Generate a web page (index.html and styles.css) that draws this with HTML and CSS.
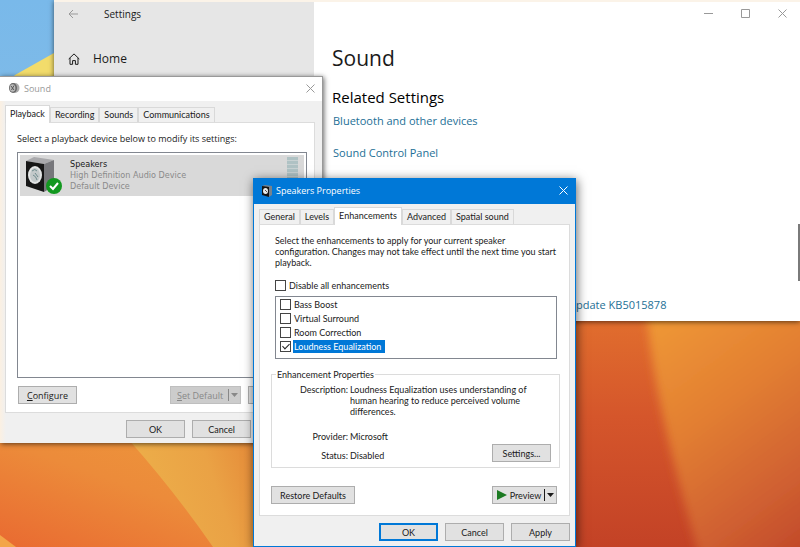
FILE: index.html
```html
<!DOCTYPE html>
<html lang="en">
<head>
    <meta charset="UTF-8">
    <meta name="viewport" content="width=device-width, initial-scale=1.0">
    <title>Sound Settings</title>
    <link rel="stylesheet" href="styles.css">
</head>
<body>
    <!-- Desktop wallpaper -->
    <svg class="wallpaper" viewBox="0 0 800 547" preserveAspectRatio="none" aria-hidden="true">
        <defs>
            <linearGradient id="sky" x1="0" y1="0" x2="0" y2="1">
                <stop offset="0" stop-color="#79b9ea"/>
                <stop offset="1" stop-color="#8fbfe0"/>
            </linearGradient>
            <linearGradient id="orange" x1="1" y1="0" x2="0" y2="1">
                <stop offset="0" stop-color="#ee9a3c"/>
                <stop offset="0.5" stop-color="#ec8b3a"/>
                <stop offset="1" stop-color="#e96a31"/>
            </linearGradient>
            <linearGradient id="petal" x1="0" y1="0.5" x2="1" y2="0.3">
                <stop offset="0" stop-color="#edb04a"/>
                <stop offset="0.5" stop-color="#eaa245"/>
                <stop offset="1" stop-color="#e27a30"/>
            </linearGradient>
            <linearGradient id="red" x1="0" y1="0" x2="0" y2="1">
                <stop offset="0" stop-color="#e2702e"/>
                <stop offset="0.45" stop-color="#d5562b"/>
                <stop offset="1" stop-color="#c34226"/>
            </linearGradient>
            <linearGradient id="glow" x1="0.2" y1="0" x2="0.7" y2="1">
                <stop offset="0" stop-color="#ef9936"/>
                <stop offset="0.4" stop-color="#e27e32"/>
                <stop offset="0.75" stop-color="#cf5f30"/>
                <stop offset="1" stop-color="#bf452a"/>
            </linearGradient>
            <filter id="soft" x="-20%" y="-20%" width="140%" height="140%">
                <feGaussianBlur stdDeviation="5"/>
            </filter>
        </defs>
        <rect width="800" height="440" fill="url(#sky)"/>
        <path d="M15 75L54 53V80H10Z" fill="#f2dc6b"/>
        <rect y="440" width="300" height="107" fill="url(#orange)"/>
        <path d="M129 440 Q175 492 213 547 H300 V440Z" fill="url(#petal)"/>
        <path d="M0 535 L16 547 H0Z" fill="#f3a548"/>
        <rect x="300" y="310" width="500" height="237" fill="url(#red)"/>
        <path d="M645 290 C650 380 672 460 706 580 H840 V290Z" fill="url(#glow)" filter="url(#soft)"/>
    </svg>

    <!-- Settings app -->
    <main class="settings">
        <aside class="sidebar">
            <header class="sidebar-header">
                <button class="icon-button" aria-label="Back">
                    <svg width="10" height="10" viewBox="0 0 10 10"><path d="M10 5H1M5 1L1 5l4 4"/></svg>
                </button>
                <span>Settings</span>
            </header>
            <a class="home-link" href="#">
                <svg width="12" height="12" viewBox="0 0 12 12"><path d="M.7 6L6 .9 11.3 6M2 5v6.3h2.6V7.6h2.8v3.7H10V5"/></svg>
                Home
            </a>
        </aside>
        <section class="content">
            <div class="window-controls">
                <button class="icon-button" aria-label="Minimize">
                    <svg width="9" height="9" viewBox="0 0 9 9"><path d="M0 4.5h9"/></svg>
                </button>
                <button class="icon-button" aria-label="Maximize">
                    <svg width="9" height="9" viewBox="0 0 9 9"><path d="M.5.5h8v8h-8z"/></svg>
                </button>
                <button class="icon-button" aria-label="Close">
                    <svg width="9" height="9" viewBox="0 0 9 9"><path d="M.5.5l8 8M8.5.5l-8 8"/></svg>
                </button>
            </div>
            <h1>Sound</h1>
            <h2>Related Settings</h2>
            <a href="#">Bluetooth and other devices</a>
            <a href="#">Sound Control Panel</a>
            <a class="update-link" href="#">Update KB5015878</a>
        </section>
        <div class="scroll-thumb"></div>
    </main>

    <!-- Sound dialog -->
    <section class="dialog sound-dialog">
        <header class="title-bar">
            <svg width="12" height="12" viewBox="0 0 12 12">
                <ellipse cx="7" cy="6" rx="4.5" ry="5" fill="#a9a9a9"/>
                <ellipse cx="5" cy="6" rx="4" ry="5" fill="#666"/>
                <ellipse cx="4.6" cy="6" rx="2.8" ry="3.8" fill="#bbb"/>
                <path d="M3 4l3 4M6 3.5L3.5 8" stroke="#555" fill="none"/>
            </svg>
            <span class="title">Sound</span>
            <button class="icon-button" aria-label="Close">
                <svg width="9" height="9" viewBox="0 0 9 9"><path d="M.5.5l8 8M8.5.5l-8 8"/></svg>
            </button>
        </header>
        <nav class="tabs">
            <button class="tab active">Playback</button>
            <button class="tab">Recording</button>
            <button class="tab">Sounds</button>
            <button class="tab">Communications</button>
        </nav>
        <div class="pane">
            <p>Select a playback device below to modify its settings:</p>
            <div class="device-list">
                <div class="device">
                    <svg class="speaker" width="40" height="38" viewBox="0 0 40 38">
                        <path d="M2 4L10 0 30 3 20 7z" fill="#a9a9ac"/>
                        <path d="M20 7L30 3V29L20 35z" fill="#77777b"/>
                        <path d="M2 4L20 7V35L2 29z" fill="#161616"/>
                        <ellipse cx="11" cy="18" rx="7" ry="9" fill="#e3e5e5"/>
                        <ellipse cx="11" cy="18" rx="5" ry="7" fill="#c3c9ca"/>
                        <path d="M8 14q3-3 5 0M9 18q3 1 4 5M11 16l3 4" stroke="#6f8c8e" fill="none"/>
                        <circle cx="30" cy="29" r="8" fill="#12981f"/>
                        <path d="M26 29l3 3 5-6" stroke="#fff" stroke-width="2" fill="none"/>
                    </svg>
                    <div class="device-text">
                        <strong>Speakers</strong>
                        <span>High Definition Audio Device</span>
                        <span>Default Device</span>
                    </div>
                    <div class="meter"></div>
                </div>
            </div>
            <div class="button-row">
                <button class="button"><u>C</u>onfigure</button>
                <span class="spacer"></span>
                <button class="button split" disabled>
                    <span><u>S</u>et Default</span>
                    <svg width="7" height="4" viewBox="0 0 7 4"><path d="M0 0h7L3.5 4z"/></svg>
                </button>
                <button class="button" aria-label="Properties"></button>
            </div>
        </div>
        <footer class="dialog-footer">
            <button class="button">OK</button>
            <button class="button">Cancel</button>
        </footer>
    </section>

    <!-- Speakers Properties dialog -->
    <section class="dialog properties-dialog">
        <header class="title-bar">
            <svg width="12" height="12" viewBox="0 0 12 12">
                <path d="M1 1l3-1 7 1v9l-3 2z" fill="#77828c"/>
                <path d="M1 1l7 1v10l-7-2z" fill="#141414"/>
                <ellipse cx="4.5" cy="6" rx="2.5" ry="3" fill="#e8eaea"/>
                <path d="M4 5l2 2" stroke="#555"/>
            </svg>
            <span class="title">Speakers Properties</span>
            <button class="icon-button" aria-label="Close">
                <svg width="9" height="9" viewBox="0 0 9 9"><path d="M.5.5l8 8M8.5.5l-8 8"/></svg>
            </button>
        </header>
        <nav class="tabs">
            <button class="tab">General</button>
            <button class="tab">Levels</button>
            <button class="tab active">Enhancements</button>
            <button class="tab">Advanced</button>
            <button class="tab">Spatial sound</button>
        </nav>
        <div class="pane">
            <p>Select the enhancements to apply for your current speaker configuration. Changes may not take effect until the next time you start playback.</p>
            <label class="check disable-all"><input type="checkbox"><span>Disable all enhancements</span></label>
            <div class="enhancement-list">
                <label class="check"><input type="checkbox"><span>Bass Boost</span></label>
                <label class="check"><input type="checkbox"><span>Virtual Surround</span></label>
                <label class="check"><input type="checkbox"><span>Room Correction</span></label>
                <label class="check selected"><input type="checkbox" checked><span>Loudness Equalization</span></label>
            </div>
            <fieldset>
                <legend>Enhancement Properties</legend>
                <dl>
                    <dt>Description:</dt>
                    <dd class="description">Loudness Equalization uses understanding of human hearing to reduce perceived volume differences.</dd>
                    <dt>Provider:</dt>
                    <dd>Microsoft</dd>
                    <dt>Status:</dt>
                    <dd>Disabled</dd>
                </dl>
                <button class="button">Settings...</button>
            </fieldset>
            <div class="button-row">
                <button class="button wide">Restore Defaults</button>
                <span class="spacer"></span>
                <button class="button split preview">
                    <svg width="10" height="10" viewBox="0 0 10 10"><path d="M0 0l10 5-10 5z" fill="#1c7a22"/></svg>
                    <span>Preview</span>
                    <svg width="7" height="4" viewBox="0 0 7 4"><path d="M0 0h7L3.5 4z"/></svg>
                </button>
            </div>
        </div>
        <footer class="dialog-footer">
            <button class="button default">OK</button>
            <button class="button">Cancel</button>
            <button class="button">Apply</button>
        </footer>
    </section>
</body>
</html>
```

FILE: styles.css
```css
* {
    box-sizing: border-box;
}

body {
    margin: 0;
    height: 100vh;
    position: relative;
    overflow: hidden;
    font-family: "Open Sans", "Noto Sans", sans-serif;
    color: #1a1a1a;
}

button {
    font: inherit;
    color: inherit;
    padding: 0;
}

svg {
    flex: none;
    display: block;
}

.wallpaper {
    position: absolute;
    width: 100%;
    height: 100%;
}

.icon-button {
    background: none;
    border: none;
    display: flex;
}

.icon-button svg,
.home-link svg {
    fill: none;
    stroke: currentColor;
}

/* Settings app */
.settings {
    position: absolute;
    top: 0;
    left: 54px;
    right: 0;
    display: flex;
    background: #fff;
    border-top: 2px solid #fbf3e8;
    box-shadow: 0 1px 5px rgba(0, 0, 0, 0.6);
}

.sidebar {
    width: 260px;
    background: #e6e6e6;
    padding: 4px 14px;
}

.sidebar-header {
    display: flex;
    align-items: center;
    gap: 26px;
    height: 16px;
    font-size: 10px;
}

.sidebar-header .icon-button {
    color: #999;
}

.home-link {
    display: flex;
    align-items: center;
    gap: 13px;
    margin-top: 28px;
    font-size: 12px;
    line-height: 18px;
    color: #1a1a1a;
    text-decoration: none;
}

.content {
    flex: 1;
    display: flex;
    flex-direction: column;
    align-items: flex-start;
    padding: 7px 13px 8px 18px;
}

.window-controls {
    align-self: flex-end;
    display: flex;
    gap: 28px;
    color: #999;
}

h1 {
    margin: 25px 0 0;
    font-size: 21px;
    line-height: 30px;
    font-weight: 400;
}

h2 {
    margin: 14px 0 6px;
    font-size: 15px;
    line-height: 20px;
    font-weight: 400;
    color: #000;
}

.content a {
    margin-bottom: 16px;
    padding-left: 1px;
    font-size: 11px;
    line-height: 16px;
    color: #1d6f96;
    text-decoration: none;
}

.content .update-link {
    margin: 120px 0 0 235px;
}

.scroll-thumb {
    position: absolute;
    right: 0;
    top: 222px;
    width: 2px;
    height: 57px;
    background: #7a7a7a;
}

/* Dialogs */
.dialog {
    position: absolute;
    width: 323px;
    background: #f0f0f0;
    font-family: "Open Sans", "Noto Sans", sans-serif;
    font-size: 9px;
    line-height: 11px;
}

.sound-dialog {
    top: 76px;
    left: 0;
    background: linear-gradient(to right, #fbf0e2, #f0f0f0 6px);
    border-top: 1px solid #999;
    border-right: 1px solid #999;
    box-shadow: 1px 1px 5px rgba(0, 0, 0, 0.6);
}

.properties-dialog {
    top: 178px;
    left: 253px;
    border: 1px solid #0078d7;
    box-shadow: 1px 2px 10px rgba(0, 0, 0, 0.6);
}

.tabs,
.properties-dialog .pane,
.dialog-footer {
    font-family: Lato, "Noto Sans", sans-serif;
}

.title-bar {
    display: flex;
    align-items: center;
    gap: 4px;
    height: 24px;
    padding: 0 7px 2px 8px;
    background: #fff;
    color: #999;
}

.properties-dialog .title-bar {
    gap: 3px;
    height: 25px;
    padding-left: 7px;
    background: #0078d7;
    color: #fff;
}

.title {
    flex: 1;
}

.tabs {
    display: flex;
    align-items: flex-end;
    height: 21px;
    padding: 0 5px;
}

.tab {
    height: 15px;
    padding: 0 4px 1px;
    background: #f0f0f0;
    border: 1px solid #d9d9d9;
    border-bottom: none;
}

.tab.active {
    height: 18px;
    margin-bottom: -1px;
    padding-bottom: 2px;
    position: relative;
    background: #fff;
}

.properties-dialog .tabs {
    height: 20px;
}

.pane {
    margin: 0 5px;
    background: #fff;
    border: 1px solid #dcdcdc;
}

.pane p {
    margin: 0;
}

.button-row {
    display: flex;
    gap: 7px;
}

.spacer {
    flex: 1;
}

.button {
    display: flex;
    align-items: center;
    justify-content: center;
    width: 59px;
    height: 18px;
    background: #e1e1e1;
    border: 1px solid #adadad;
}

.button.wide {
    width: 84px;
}

.button.default {
    border: 2px solid #0078d7;
}

.button:disabled {
    background: #ccc;
    border-color: #bfbfbf;
    color: #888;
}

.split {
    width: 71px;
    justify-content: space-between;
    padding-left: 6px;
    padding-right: 2px;
}

.split svg:last-child {
    fill: currentColor;
    box-sizing: content-box;
    padding: 4px 0 4px 2px;
    border-left: 1px solid currentColor;
}

.dialog-footer {
    display: flex;
    justify-content: flex-end;
    gap: 7px;
    padding: 7px 5px 5px;
}

/* Sound dialog contents */
.sound-dialog .pane {
    margin-right: 7px;
    padding: 10px 7px 8px 11px;
}

.device-list {
    height: 226px;
    margin: 8px 0;
    padding: 2px;
    border: 1px solid #828790;
}

.sound-dialog .button-row {
    padding-left: 1px;
}

.device {
    display: flex;
    height: 41px;
    padding: 2px 6px 2px 4px;
    background: #d9d9d9;
}

.device-text {
    flex: 1;
    display: flex;
    flex-direction: column;
    padding: 2px 0 0 6px;
    font-family: "DejaVu Sans Condensed", "Noto Sans", sans-serif;
    color: #8a8a8a;
}

.device-text strong {
    font-weight: 400;
    color: #1a1a1a;
}

.meter {
    width: 11px;
    height: 34px;
    background: repeating-linear-gradient(#afc2c4 0 3px, #c8d2d3 3px 4px);
}

.sound-dialog .dialog-footer {
    padding-right: 71px;
}

/* Properties dialog contents */
.properties-dialog .pane {
    padding: 10px 9px 11px 11px;
}

.properties-dialog .pane p {
    padding-left: 4px;
}

.properties-dialog .button-row {
    padding-right: 3px;
}

.check {
    display: flex;
    align-items: center;
    height: 14px;
}

.check input {
    appearance: none;
    position: relative;
    width: 11px;
    height: 11px;
    margin: 0;
    background: #fff;
    border: 1px solid #444;
}

.check input:checked::after {
    content: "";
    position: absolute;
    left: 3px;
    top: 0;
    width: 3px;
    height: 6px;
    border: solid #222;
    border-width: 0 1px 1px 0;
    transform: rotate(45deg);
}

.check span {
    padding: 0 3px;
    line-height: 13px;
}

.disable-all {
    margin: 10px 0 4px 4px;
}

.enhancement-list {
    height: 63px;
    margin: 0 3px 0 4px;
    padding: 0 4px;
    border: 1px solid #828790;
}

.selected span {
    margin-left: 2px;
    padding: 0 4px 0 1px;
    background: #0078d7;
    color: #fff;
}

fieldset {
    display: flex;
    flex-direction: column;
    margin: 10px 0 18px;
    padding: 4px 8px 5px;
    border: 1px solid #dcdcdc;
    position: relative;
}

legend {
    padding: 0 1px;
    margin-left: -4px;
}

dl {
    display: grid;
    grid-template-columns: 68px 180px;
    column-gap: 2px;
    row-gap: 8px;
    margin: 0;
}

dt {
    text-align: right;
}

dd {
    margin: 0;
}

.description {
    margin-bottom: 6px;
}

fieldset .button {
    align-self: flex-end;
    margin-top: -17px;
}

.preview {
    width: 65px;
    padding-left: 4px;
}
```
